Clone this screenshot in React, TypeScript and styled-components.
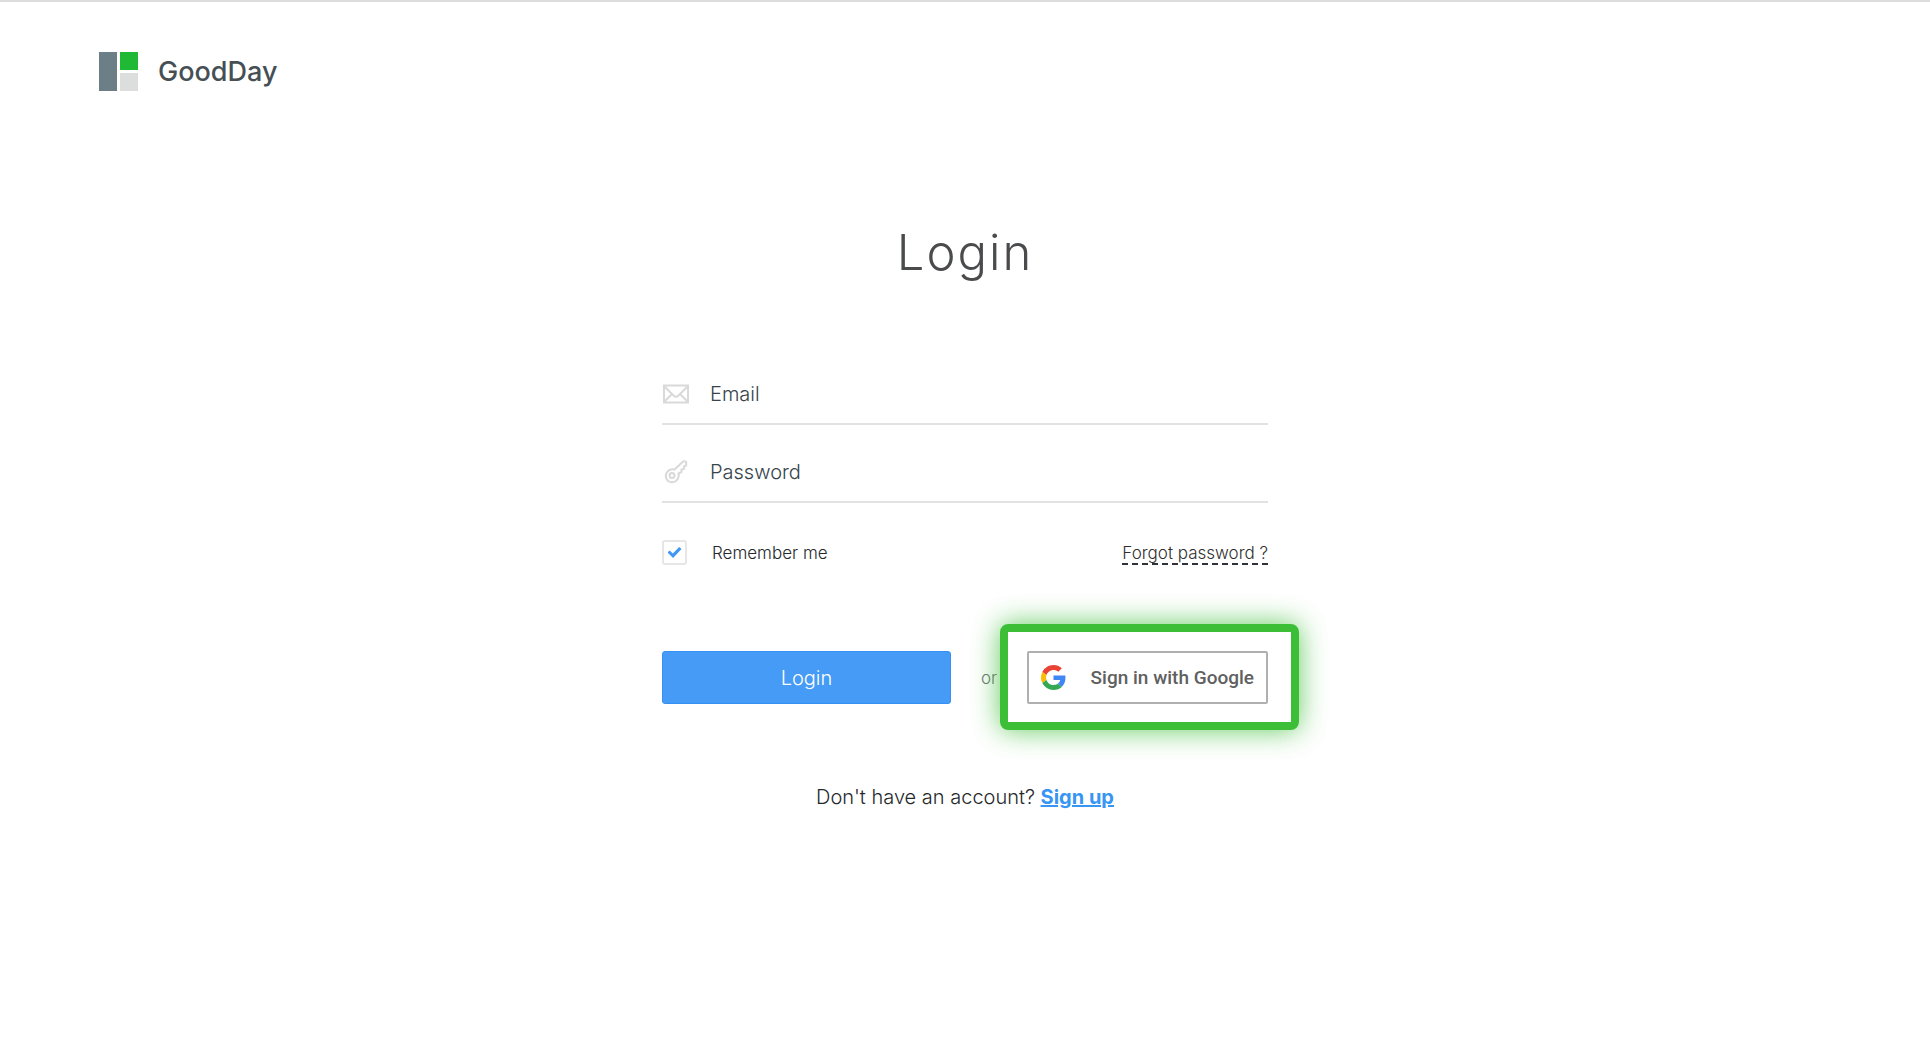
import React, { useState } from "react";
import styled, { createGlobalStyle } from "styled-components";

const GlobalStyle = createGlobalStyle`
  *, *::before, *::after { box-sizing: border-box; }
  body {
    margin: 0;
    background: #fff;
    color: #25292c;
    font-family: Inter, "Open Sans", sans-serif;
    font-weight: 300;
  }
`;

const Page = styled.div`
  min-height: 100vh;
  border-top: 2px solid #dddddd;
`;

const Header = styled.header`
  display: flex;
  padding: 50px 99px 0;
`;

const Brand = styled.a`
  display: flex;
  align-items: center;
  gap: 19px;
  color: #454f54;
  font: 500 27px/39px Inter, sans-serif;
  text-decoration: none;
`;

const Main = styled.main`
  width: 100%;
  max-width: 646px;
  margin: 0 auto;
  padding: 132px 20px 40px;
`;

const Title = styled.h1`
  margin: 0;
  color: #4a4b4d;
  font-size: 49px;
  font-weight: 300;
  line-height: 60px;
  letter-spacing: 2px;
  text-align: center;
`;

const Form = styled.form`
  display: flex;
  flex-direction: column;
  margin-top: 82px;
`;

const Fields = styled.div`
  display: grid;
  gap: 18px;
`;

const Field = styled.label`
  display: flex;
  align-items: center;
  gap: 20px;
  height: 60px;
  border-bottom: 2px solid #e2e2e2;

  svg {
    flex: none;
  }
`;

const Input = styled.input`
  flex: 1;
  min-width: 0;
  padding: 0;
  border: 0;
  outline: 0;
  background: transparent;
  color: #37444b;
  font: 300 20px/28px Inter, sans-serif;

  &::placeholder {
    color: #37444b;
    opacity: 1;
  }
`;

const Options = styled.div`
  display: flex;
  align-items: center;
  justify-content: space-between;
  margin-top: 37px;
`;

const Remember = styled.label`
  display: flex;
  align-items: center;
  gap: 25px;
  font-size: 17px;
  line-height: 24px;
`;

const Checkbox = styled.input`
  appearance: none;
  display: grid;
  place-items: center;
  width: 25px;
  height: 25px;
  margin: 0;
  border: 2px solid #e6e6e6;
  border-radius: 3px;

  &:checked::before {
    content: "";
    width: 14px;
    height: 11px;
    background: #3f97f6;
    clip-path: polygon(0 50%, 16% 31%, 38% 60%, 84% 0, 100% 18%, 40% 100%);
  }
`;

const Forgot = styled.a`
  align-self: flex-end;
  border-bottom: 2px dashed #2f3337;
  color: #303030;
  font-size: 17px;
  line-height: 20px;
  text-decoration: none;
`;

const Actions = styled.div`
  display: flex;
  align-items: center;
  justify-content: space-between;
  margin-top: 86px;
`;

const LoginButton = styled.button`
  width: 289px;
  height: 53px;
  border: 1px solid #3590f2;
  border-radius: 3px;
  background: #459bf5;
  color: #fff;
  font: 300 20px/28px Inter, sans-serif;
`;

const Or = styled.span`
  color: #6b7478;
  font-size: 17px;
`;

const Highlight = styled.div`
  position: relative;

  &::after {
    content: "";
    position: absolute;
    inset: -27px -31px -26px -27px;
    border: 8px solid #3cbe37;
    border-radius: 8px;
    box-shadow: 0 0 28px rgba(60, 190, 55, 0.8);
    pointer-events: none;
  }
`;

const GoogleButton = styled.button`
  display: flex;
  align-items: center;
  justify-content: space-between;
  width: 241px;
  height: 53px;
  padding: 0 12px;
  border: 2px solid #b0b0b0;
  border-radius: 2px;
  background: #fff;
  color: #606060;
  font: 500 19px/24px Roboto, sans-serif;
`;

const Signup = styled.p`
  margin: 79px 0 0;
  font-size: 20px;
  line-height: 28px;
  text-align: center;

  a {
    color: #3795f3;
    font-weight: 700;
  }
`;

const Logo = () => (
  <svg width="40" height="39" viewBox="0 0 40 39" aria-hidden="true">
    <rect width="18" height="39" fill="#6c7e86" />
    <rect x="21" width="18" height="18" fill="#20b936" />
    <rect x="21" y="21" width="18" height="18" fill="#dcdddd" />
  </svg>
);

const MailIcon = () => (
  <svg width="28" height="20" viewBox="0 0 28 20" fill="none" stroke="#d9d9d9" strokeWidth="2" aria-hidden="true">
    <path d="M2 1.5H26V18.5H2Z" />
    <path d="M2 2L11.5 11.5Q14 14 16.500 11.500L26 2M2 18L10 10M26 18L18 10" />
  </svg>
);

const KeyIcon = () => (
  <svg width="28" height="24" viewBox="0 0 28 24" fill="none" stroke="#d9d9d9" strokeWidth="2" strokeLinejoin="round" aria-hidden="true">
    <path d="M12.500 9.500L20.500 2Q22.500 0.500 24.200 2V5.500L22 6.500V9L19.500 9.500V12L16.500 13.500Q17.500 18 14 21Q10 23.500 6 21Q2.500 17.500 4.500 13Q7.500 8.500 12.500 9.500Z" />
    <circle cx="10" cy="15.500" r="2.500" />
  </svg>
);

const GoogleLogo = () => (
  <svg width="25" height="25" viewBox="0 0 48 48" aria-hidden="true">
    <path fill="#EA4335" d="M24 9.500c3.540 0 6.710 1.220 9.210 3.600l6.850-6.850C35.900 2.380 30.470 0 24 0 14.620 0 6.510 5.380 2.560 13.220l7.980 6.190C12.430 13.720 17.740 9.500 24 9.500z" />
    <path fill="#4285F4" d="M46.980 24.550c0-1.570-.15-3.090-.38-4.550H24v9.020h12.940c-.58 2.960-2.260 5.480-4.780 7.180l7.730 6c4.510-4.180 7.090-10.360 7.090-17.650z" />
    <path fill="#FBBC05" d="M10.530 28.590c-.48-1.450-.76-2.990-.76-4.590s.27-3.140.76-4.590l-7.980-6.190C.92 16.460 0 20.120 0 24c0 3.880.92 7.540 2.560 10.780l7.970-6.190z" />
    <path fill="#34A853" d="M24 48c6.480 0 11.930-2.130 15.890-5.810l-7.730-6c-2.150 1.450-4.920 2.300-8.160 2.300-6.260 0-11.570-4.220-13.470-9.910l-7.980 6.190C6.510 42.620 14.620 48 24 48z" />
  </svg>
);

export default function App() {
  const [remember, setRemember] = useState(true);

  return (
    <>
      <GlobalStyle />
      <Page>
        <Header>
          <Brand href="#">
            <Logo />
            GoodDay
          </Brand>
        </Header>
        <Main>
          <Title>Login</Title>
          <Form onSubmit={(e) => e.preventDefault()}>
            <Fields>
              <Field htmlFor="email">
                <MailIcon />
                <Input id="email" type="email" placeholder="Email" aria-label="Email" />
              </Field>
              <Field htmlFor="password">
                <KeyIcon />
                <Input id="password" type="password" placeholder="Password" aria-label="Password" />
              </Field>
            </Fields>
            <Options>
              <Remember htmlFor="remember">
                <Checkbox
                  id="remember"
                  type="checkbox"
                  checked={remember}
                  onChange={(e) => setRemember(e.target.checked)}
                />
                Remember me
              </Remember>
              <Forgot href="#">Forgot password ?</Forgot>
            </Options>
            <Actions>
              <LoginButton type="submit">Login</LoginButton>
              <Or>or</Or>
              <Highlight>
                <GoogleButton type="button">
                  <GoogleLogo />
                  Sign in with Google
                </GoogleButton>
              </Highlight>
            </Actions>
          </Form>
          <Signup>
            Don't have an account? <a href="#">Sign up</a>
          </Signup>
        </Main>
      </Page>
    </>
  );
}
